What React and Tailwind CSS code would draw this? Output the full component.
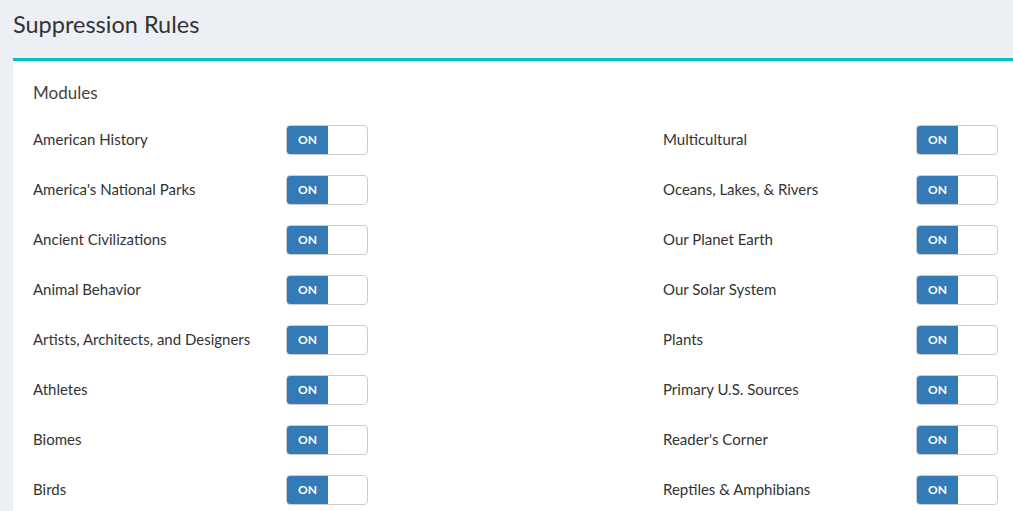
const left = ["American History","America's National Parks","Ancient Civilizations","Animal Behavior","Artists, Architects, and Designers","Athletes","Biomes","Birds"];
const right = ["Multicultural","Oceans, Lakes, & Rivers","Our Planet Earth","Our Solar System","Plants","Primary U.S. Sources","Reader's Corner","Reptiles & Amphibians"];

function Toggle() {
  return (
    <div className="flex h-[30px] w-[82px] overflow-hidden rounded-[4px] border border-[#cccccc] bg-white">
      <div className="flex w-[41px] items-center justify-center bg-[#337ab7] text-[12px] font-bold text-white">ON</div>
      <div className="flex-1" />
    </div>
  );
}

function Row({ label }) {
  return (
    <div className="flex h-[50px] items-center">
      <div className="w-[253px] pb-[2px] text-[15px] text-[#333]">{label}</div>
      <Toggle />
    </div>
  );
}

export default function App() {
  return (
    <div className="h-[511px] w-[1013px] overflow-hidden bg-[#ecf0f5]" style={{ fontFamily: "Lato, 'Noto Sans', sans-serif" }}>
      <div className="h-[58px] pl-[13px] pt-[9px] text-[23.5px] text-[#333] leading-[30px]">Suppression Rules</div>
      <div className="ml-[13px] w-[1300px] border-t-[3px] border-[#00c0c0] bg-white px-[20px]">
        <div className="pt-[20px] text-[17px] text-[#444] leading-[24px]">Modules</div>
        <div className="mt-[10px] flex">
          <div className="w-[630px]">
            {left.map((l) => <Row key={l} label={l} />)}
          </div>
          <div className="w-[630px]">
            {right.map((l) => <Row key={l} label={l} />)}
          </div>
        </div>
      </div>
    </div>
  );
}
